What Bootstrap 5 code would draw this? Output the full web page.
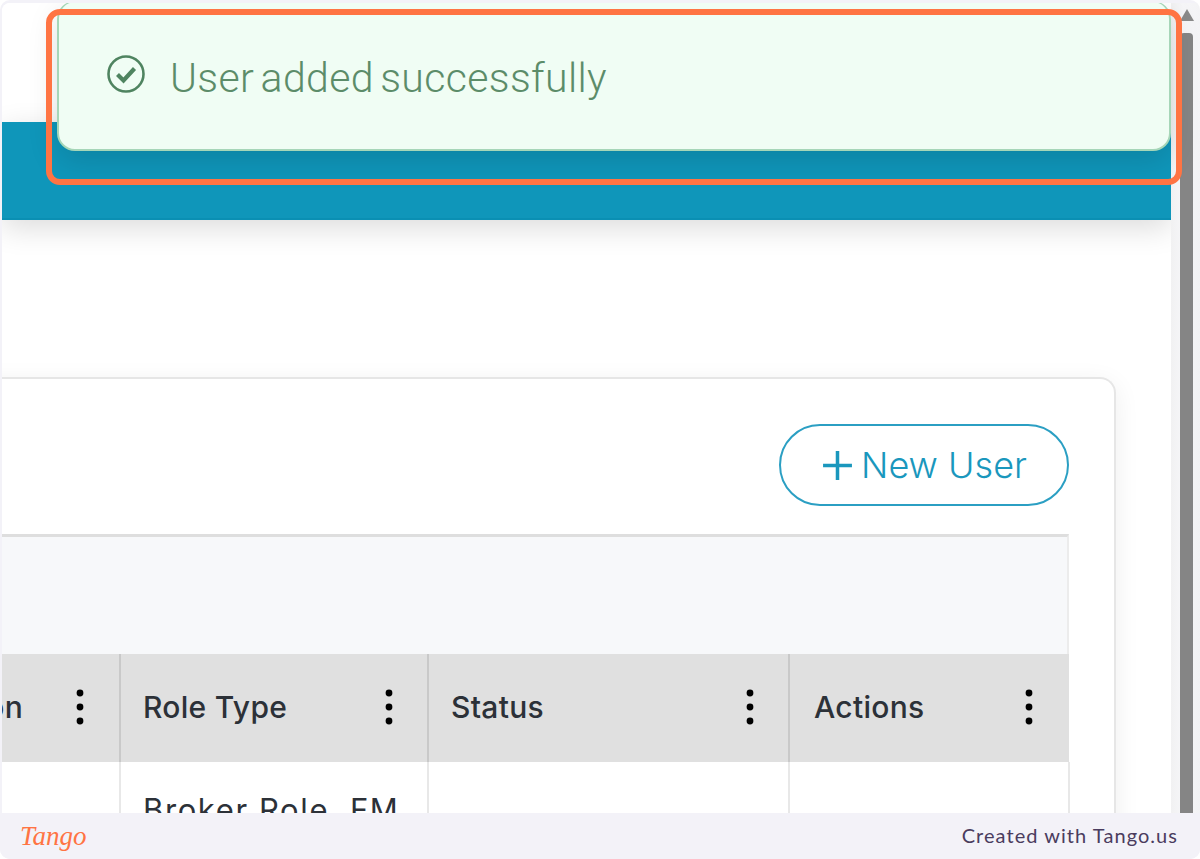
<!DOCTYPE html>
<html lang="en">
<head>
<meta charset="utf-8">
<title>User added successfully</title>
<link href="https://cdn.jsdelivr.net/npm/bootstrap@5.3.0/dist/css/bootstrap.min.css" rel="stylesheet">
<style>
html,body{margin:0;height:859px;background:#fff;overflow:hidden;font-family:"Inter","Liberation Sans",sans-serif}
.frame-box{width:1200px;height:859px;background:#f3f2f8;border-radius:10px;padding:3px 0 0 2px;overflow:hidden;position:relative}
.shot{height:810px;overflow:hidden;background:#fff;border-radius:8px 0 0 0;position:relative}
.pane{width:1169px;height:810px;flex:none;background:#fff;overflow:hidden}
.top-gap{height:119px}
.teal-band{height:98px;background:#0f96ba;border-bottom:2px solid #0a8fb3;box-shadow:0 8px 28px rgba(0,0,0,.14)}
.card-wrap{padding:157px 55px 0 0;margin-left:-300px}
.user-card{border:2px solid #e6e6e6;border-bottom:0;border-radius:16px 16px 0 0;background:#fff;box-shadow:0 6px 26px rgba(0,0,0,.07);padding:45px 45px 0 0}
.new-btn{width:290px;height:82px;border:2px solid #2b9fc3;border-radius:41px;background:#fff;color:#1a97bd;font-size:36px;font-weight:300;line-height:1;padding:0;gap:7px}
.new-btn svg{width:33px;height:33px}
.tool-strip{height:120px;margin-top:28px;background:#f7f8fa;border-top:3px solid #dedede;border-right:2px solid #ececec}
.grid-table{table-layout:fixed;width:100%;margin:0;color:#2c3138;--bs-table-bg:transparent}
.grid-table th{background:#e0e0e0;height:108px;font-weight:450;font-size:30px;letter-spacing:.3px;padding:0 34px 2px 22px;border:0;border-right:2px solid #c9c9c9;vertical-align:middle}
.grid-table th:last-child{border-right:0;padding:0 36px 2px 24px}
.grid-table td{font-size:31px;letter-spacing:1.6px;font-weight:400;height:200px;padding:25px 22px;vertical-align:top;border:0;border-right:2px solid #e8e8e8}
.hd-first{gap:53px;white-space:nowrap;margin-right:1px}
.dots{width:8px;height:36px;flex:none}
.gutter{width:29px;background:linear-gradient(90deg,#f1f1f2,#f6f6f8 40%,#f3f3f5);position:relative}
.arrow-up{width:14px;height:12px;margin:6px 0 0 9px;background:#8a8a8a;clip-path:polygon(50% 0,100% 100%,0 100%)}
.thumb{width:13px;height:800px;margin:12px 0 0 9px;background:#858585;border-radius:4px 4px 0 0}
.toast-box{position:absolute;left:55px;top:-2px;width:1114px;height:150px;background:#f0fdf4;border:2px solid #a6d6b8;border-top-width:1px;border-radius:18px;box-shadow:0 10px 30px rgba(0,0,0,.13);color:#5c8c69;font-family:"Roboto","Inter",sans-serif;font-size:41px;font-weight:300;padding:0 0 0 47px;gap:24px;letter-spacing:.36px;word-spacing:-4px}
.toast-box svg{width:40px;height:40px;flex:none;margin-top:-3px}
.toast-box span{margin-top:6px}
.mark-ring{position:absolute;left:46px;top:9px;width:1136px;height:176px;border:6px solid #ff7443;border-radius:14px;pointer-events:none}
.foot-bar{position:absolute;left:0;right:0;bottom:0;height:46px;background:#f3f2f8;padding:0 22px 0 20px}
.brand-script{font-family:"Liberation Serif",serif;font-style:italic;font-size:27px;color:#ff7443;line-height:1}
.made-by{font-family:"Lato","Liberation Sans",sans-serif;font-size:20px;color:#4a3c5e;letter-spacing:1.05px;margin-bottom:2px}
</style>
</head>
<body>
<div class="frame-box">
  <div class="shot d-flex">
    <div class="pane">
      <div class="top-gap"></div>
      <div class="teal-band"></div>
      <div class="card-wrap">
        <div class="user-card">
          <div class="d-flex justify-content-end">
            <button class="new-btn btn d-flex align-items-center justify-content-center" type="button">
              <svg viewBox="0 0 32 32" aria-hidden="true"><path d="M16 2v28M2 16h28" stroke="#1a97bd" stroke-width="3.4" fill="none"/></svg>
              <span>New User</span>
            </button>
          </div>
          <div class="tool-strip"></div>
          <table class="table grid-table">
            <colgroup><col style="width:416px"><col style="width:308px"><col style="width:361px"><col style="width:280px"></colgroup>
            <thead>
              <tr>
                <th><div class="d-flex justify-content-end align-items-center hd-first"><span>Role Description</span><svg class="dots" viewBox="0 0 8 36"><circle cx="4" cy="4" r="3.4"/><circle cx="4" cy="18" r="3.4"/><circle cx="4" cy="32" r="3.4"/></svg></div></th>
                <th><div class="d-flex justify-content-between align-items-center"><span>Role Type</span><svg class="dots" viewBox="0 0 8 36"><circle cx="4" cy="4" r="3.4"/><circle cx="4" cy="18" r="3.4"/><circle cx="4" cy="32" r="3.4"/></svg></div></th>
                <th><div class="d-flex justify-content-between align-items-center"><span>Status</span><svg class="dots" viewBox="0 0 8 36"><circle cx="4" cy="4" r="3.4"/><circle cx="4" cy="18" r="3.4"/><circle cx="4" cy="32" r="3.4"/></svg></div></th>
                <th><div class="d-flex justify-content-between align-items-center"><span>Actions</span><svg class="dots" viewBox="0 0 8 36"><circle cx="4" cy="4" r="3.4"/><circle cx="4" cy="18" r="3.4"/><circle cx="4" cy="32" r="3.4"/></svg></div></th>
              </tr>
            </thead>
            <tbody>
              <tr><td></td><td>Broker Role, FM</td><td></td><td></td></tr>
            </tbody>
          </table>
        </div>
      </div>
    </div>
    <div class="gutter">
      <div class="arrow-up"></div>
      <div class="thumb"></div>
    </div>
    <div class="toast-box d-flex align-items-center">
      <svg viewBox="0 0 40 40" aria-hidden="true"><circle cx="20" cy="20" r="17.5" fill="none" stroke="#4f8460" stroke-width="2.6"/><path d="M11.5 20.5l6 6 11-12" fill="none" stroke="#4f8460" stroke-width="4.2"/></svg>
      <span>User added successfully</span>
    </div>
  </div>
  <div class="mark-ring"></div>
  <div class="foot-bar d-flex align-items-center justify-content-between">
    <span class="brand-script">Tango</span>
    <span class="made-by">Created with Tango.us</span>
  </div>
</div>
<script src="https://cdn.jsdelivr.net/npm/bootstrap@5.3.0/dist/js/bootstrap.bundle.min.js"></script>
</body>
</html>
